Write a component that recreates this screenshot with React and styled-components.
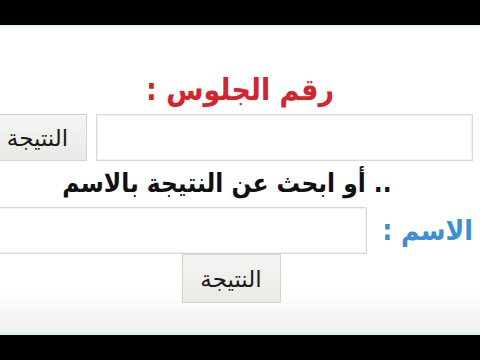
import React from "react";
import styled, { createGlobalStyle } from "styled-components";

const Global = createGlobalStyle`
  html, body { margin: 0; padding: 0; background: #000; }
  body { width: 480px; height: 360px; overflow: hidden; font-family: "DejaVu Sans", "Noto Sans", sans-serif; }
`;

const Frame = styled.div`
  width: 480px;
  height: 360px;
  display: flex;
  flex-direction: column;
  background: #000;
  overflow: hidden;
`;

const Bar = styled.div`
  height: 25px;
  flex: none;
  background: #000;
`;

const Screen = styled.div`
  flex: none;
  height: 310px;
  box-sizing: border-box;
  display: flex;
  flex-direction: column;
  overflow: hidden;
  background: linear-gradient(
    to bottom,
    #d8f6f6 0px,
    #ffffff 4px,
    #ffffff 268px,
    #f1f1f1 300px,
    #f3f4f4 306px,
    #c9eef0 310px
  );
  padding-top: 43px;
  direction: rtl;
`;

const Title = styled.div`
  height: 44px;
  line-height: 44px;
  text-align: center;
  font-size: 30px;
  font-stretch: condensed;
  font-weight: bold;
  color: #d8232d;
  white-space: nowrap;
`;

const Row = styled.div`
  display: flex;
  flex-direction: row;
  align-items: stretch;
  justify-content: flex-start;
  gap: ${(p) => p.$gap}px;
  padding-right: 7px;
  height: 47px;
  margin-top: ${(p) => p.$top}px;
`;

const Field = styled.div`
  flex: none;
  width: ${(p) => p.$width}px;
  background: #fff;
  border: 1px solid #d9d9d9;
  box-shadow: inset 0 0 0 1px #f1f1f1;
  box-sizing: border-box;
`;

const Button = styled.div`
  flex: none;
  width: 99px;
  height: ${(p) => p.$h}px;
  box-sizing: border-box;
  border: 1px solid #d3d3d0;
  background: linear-gradient(to bottom, #f5f5f3, #e9e9e6);
  display: flex;
  align-items: center;
  justify-content: center;
  font-size: 23px;
  color: #1a1a1a;
  white-space: nowrap;
`;

const SubTitle = styled.div`
  height: 44px;
  line-height: 44px;
  text-align: center;
  padding-right: 26px;
  font-size: 26px;
  font-stretch: condensed;
  font-weight: bold;
  color: #111;
  white-space: nowrap;
`;

const Label = styled.div`
  flex: none;
  width: 106px;
  line-height: 47px;
  font-size: 28px;
  font-stretch: condensed;
  font-weight: bold;
  color: #3a8fd8;
  white-space: nowrap;
  text-align: right;
`;

const ButtonRow = styled.div`
  display: flex;
  justify-content: center;
  padding-right: 18px;
`;

export default function App() {
  return (
    <>
      <Global />
      <Frame>
        <Bar />
        <Screen>
          <Title>رقم الجلوس :</Title>
          <Row $gap={9} $top={2}>
            <Field $width={377} />
            <Button $h={47}>النتيجة</Button>
          </Row>
          <SubTitle>.. أو ابحث عن النتيجة بالاسم</SubTitle>
          <Row $gap={0} $top={2}>
            <Label>الاسم :</Label>
            <Field $width={420} />
          </Row>
          <ButtonRow>
            <Button $h={49}>النتيجة</Button>
          </ButtonRow>
        </Screen>
        <Bar />
      </Frame>
    </>
  );
}
